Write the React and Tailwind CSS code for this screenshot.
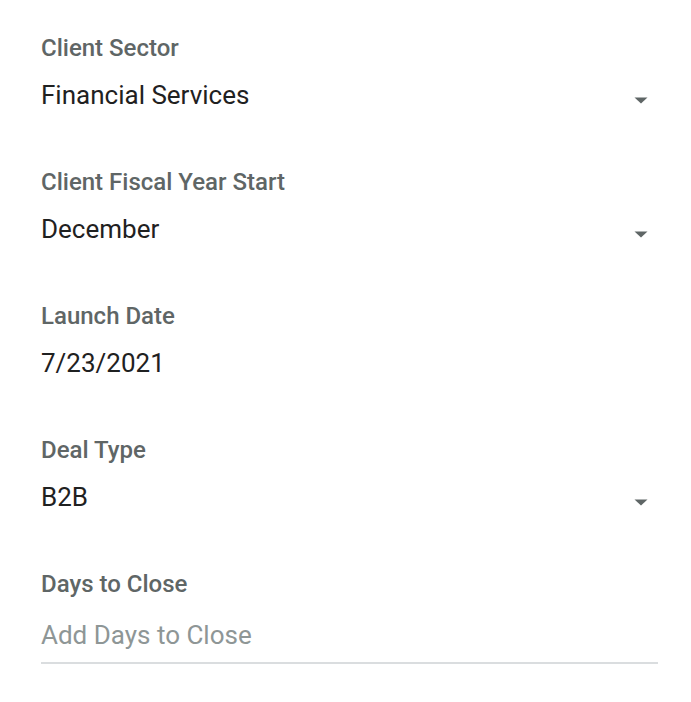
import React from "react";

const fields = [
  { label: "Client Sector", value: "Financial Services", select: true },
  { label: "Client Fiscal Year Start", value: "December", select: true },
  { label: "Launch Date", value: "7/23/2021" },
  { label: "Deal Type", value: "B2B", select: true },
];

const Arrow = () => (
  <svg width="14" height="7" viewBox="0 0 14 7" className="mt-[18px] mr-[10px] shrink-0">
    <path d="M0.5 0.5h13L7 6.5z" fill="#5f6666" />
  </svg>
);

export default function App() {
  return (
    <div
      className="min-h-[702px] bg-white pl-[41px] pr-[33px] pt-[34px]"
      style={{ fontFamily: "Roboto, 'Liberation Sans', sans-serif" }}
    >
      {fields.map((f) => (
        <div key={f.label} className="mb-[57px]">
          <div className="text-[24px] leading-[28px] font-medium text-[#5f6666]">{f.label}</div>
          <div className="mt-[17px] flex items-start justify-between">
            <span className="text-[26px] leading-[32px] text-[#1f2121]">{f.value}</span>
            {f.select && <Arrow />}
          </div>
        </div>
      ))}
      <div>
        <div className="text-[24px] leading-[28px] font-medium text-[#5f6666]">Days to Close</div>
        <div className="mt-[21px] border-b-2 border-[#dadddf] pb-[11px]">
          <span className="text-[26px] leading-[32px] text-[#8e9696]">Add Days to Close</span>
        </div>
      </div>
    </div>
  );
}
